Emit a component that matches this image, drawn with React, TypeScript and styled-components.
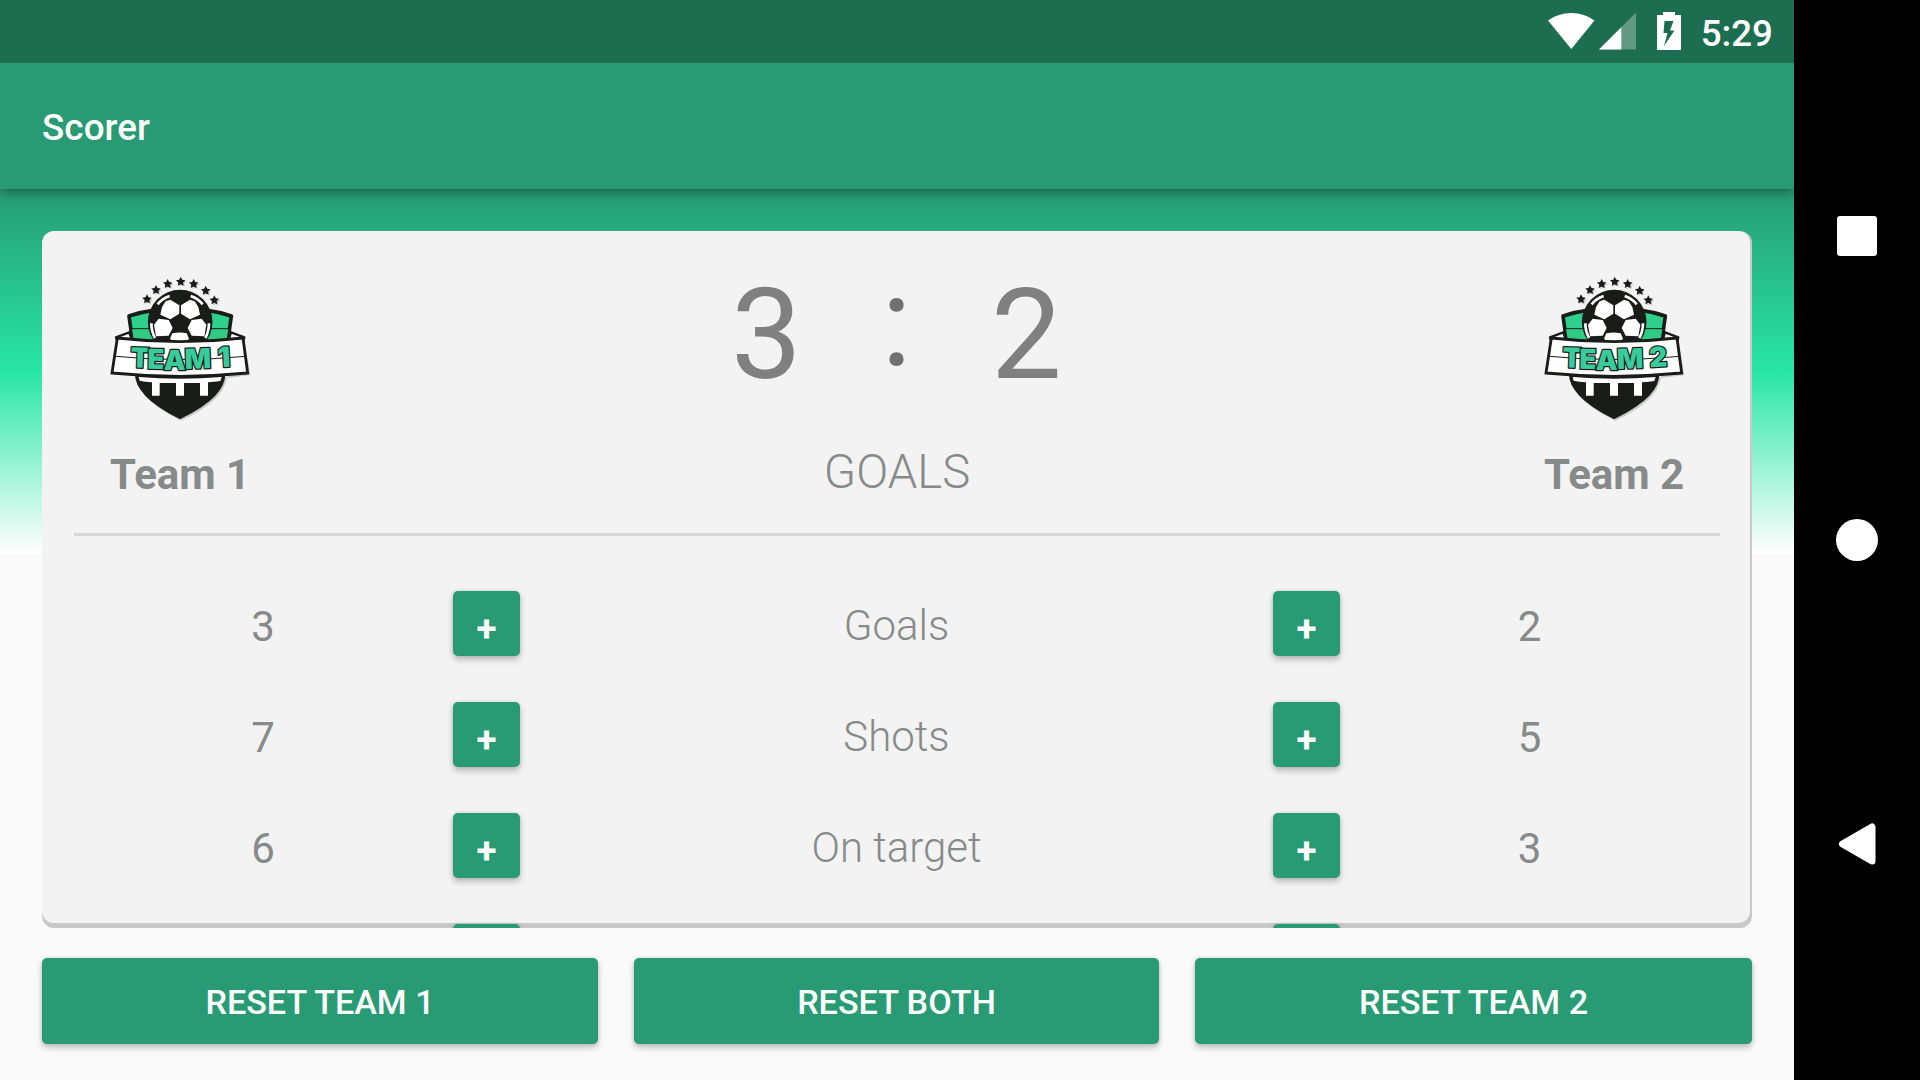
import React, { useState } from 'react';
import styled, { createGlobalStyle } from 'styled-components';

const GREEN = '#289b74';
const INK = '#1a1c1a';

const GlobalStyle = createGlobalStyle`
  * { box-sizing: border-box; }
  body {
    margin: 0;
    background: #fafafa;
    font-family: Roboto, "Liberation Sans", sans-serif;
    overflow: hidden;
  }
  svg { display: block; }
`;

const Device = styled.div`
  display: grid;
  grid-template-columns: 1794px 126px;
  width: 1920px;
  height: 1080px;
`;

const Screen = styled.div`
  display: flex;
  flex-direction: column;
  height: 1080px;
  overflow: hidden;
  background: #fafafa;
`;

const StatusBar = styled.div`
  display: flex;
  justify-content: flex-end;
  flex: none;
  height: 63px;
  padding: 12px 21px 0 0;
  background: #1d6d51;
  z-index: 2;
`;

const StatusIcon = styled.svg<{ $gap: number }>`
  flex: none;
  margin-right: ${(p) => p.$gap}px;
`;

const Clock = styled.span`
  color: #fff;
  font-size: 36.75px;
  font-weight: 500;
  line-height: 43px;
`;

const AppBar = styled.header`
  display: flex;
  align-items: center;
  flex: none;
  height: 126px;
  padding: 2px 42px 0;
  background: ${GREEN};
  box-shadow: 0 3px 11px rgba(0, 0, 0, 0.38);
  z-index: 1;
`;

const Title = styled.h1`
  margin: 0;
  color: #fff;
  font-size: 36.75px;
  font-weight: 500;
  letter-spacing: 0.1px;
`;

const Body = styled.main`
  display: flex;
  flex-direction: column;
  flex: 1;
  gap: 30px;
  padding: 42px;
  background: linear-gradient(${GREEN} 0, #27e6a5 182px, #fff 364px) top / 100% 364.5px no-repeat;
`;

const Card = styled.section`
  position: relative;
  flex: none;
  height: 697px;
  border-radius: 12px;
  overflow: hidden;
  background: #c8c8c8;
  &::before {
    content: '';
    position: absolute;
    inset: 0 2px 5px 0;
    border-radius: 12px;
    background: #f3f3f3;
  }
`;

const CardContent = styled.div`
  position: relative;
`;

const Header = styled.div`
  display: grid;
  grid-template-columns: 142px 1fr 142px;
  height: 302px;
  padding: 45px 66px 0 68px;
`;

const Team = styled.div`
  display: flex;
  flex-direction: column;
  gap: 29px;
`;

const TeamName = styled.div`
  color: #868b8a;
  font-size: 42px;
  font-weight: 700;
  line-height: 50px;
  white-space: nowrap;
`;

const Center = styled.div`
  display: flex;
  flex-direction: column;
  align-items: center;
  padding-right: 3px;
`;

const Score = styled.div`
  display: grid;
  grid-template-columns: 130px 130px 130px;
  justify-items: center;
  height: 118px;
  color: #808080;
  font-size: 126px;
  line-height: 118px;
`;

const Colon = styled.span`
  margin-top: -13px;
  color: #707070;
`;

const Caption = styled.div`
  margin-top: 50px;
  padding-left: 1px;
  color: #868b8a;
  font-size: 47.25px;
  font-weight: 300;
  line-height: 56px;
`;

const Divider = styled.hr`
  height: 3px;
  margin: 0 32px;
  border: 0;
  background: #d7d7d7;
`;

const Stats = styled.div`
  display: grid;
  grid-auto-rows: 65px;
  row-gap: 46px;
  padding-top: 55px;
`;

const Cell = styled.span<{ $kind: 'home' | 'label' | 'away' }>`
  grid-column: ${(p) => ({ home: 1, label: 4, away: 7 })[p.$kind]};
  padding-top: ${(p) => (p.$kind === 'label' ? 4 : 5)}px;
  color: #868b8a;
  font-size: 42px;
  font-weight: ${(p) => (p.$kind === 'label' ? 300 : 400)};
  line-height: 49px;
`;

const StatRow = styled.div`
  display: grid;
  grid-template-columns: 230px 75px 67px 1fr 67px 75px 229px;
  align-items: center;
  justify-items: center;
  padding: 0 108px 0 106px;
`;

const Raised = styled.button`
  border: 0;
  border-radius: 5px;
  background: ${GREEN};
  box-shadow: 0 4px 6px rgba(0, 0, 0, 0.22), 0 0 4px rgba(0, 0, 0, 0.12);
  color: #fff;
  font-family: inherit;
`;

const AddButton = styled(Raised)<{ $side: 'home' | 'away' }>`
  grid-column: ${(p) => (p.$side === 'home' ? 3 : 5)};
  width: 67px;
  height: 65px;
  padding: 9px 0 0;
  font-size: 36.75px;
  font-weight: 700;
  line-height: 43px;
`;

const Actions = styled.div`
  display: grid;
  grid-template-columns: 556px 525px 557px;
  gap: 36px;
  height: 86px;
`;

const ActionButton = styled(Raised)`
  padding: 2px 0 0;
  font-size: 34.125px;
  font-weight: 500;
  text-transform: uppercase;
`;

const NavBar = styled.nav`
  display: flex;
  flex-direction: column;
  justify-content: space-between;
  align-items: center;
  padding: 215px 0 215px;
  background: #000;
`;

const star = (cx: number, cy: number, r: number) =>
  Array.from({ length: 10 }, (_, i) => {
    const a = (Math.PI / 5) * i - Math.PI / 2;
    const d = i % 2 ? r * 0.5 : r;
    return `${(cx + d * Math.cos(a)).toFixed(1)},${(cy + d * Math.sin(a)).toFixed(1)}`;
  }).join(' ');

const STARS = [
  [171, 118], [198, 90], [233, 72], [272, 65], [311, 72], [347, 92], [373, 121],
];

function BallHalf() {
  return (
    <g fill="#fff">
      <polygon points="216,141 227,124 241,119 268,136 268,161 241,178 211,164" />
      <polygon points="192,194 206,176 236,180 248,204 236,227 198,229" />
      <path d="M203 133Q216 116 239 108" fill="none" stroke="#fff" strokeWidth="8" />
      <path d="M184 190Q184 214 195 234" fill="none" stroke="#fff" strokeWidth="8" />
    </g>
  );
}

function ShieldHalf() {
  return (
    <g stroke={INK} strokeLinejoin="round">
      <path d="M78 232L118 217L126 242L82 244Z" fill="#fff" strokeWidth="7" />
      <path d="M117 168Q150 156 190 151V246H128Z" fill="#2fd08b" strokeWidth="11" />
      <path d="M126 208H190V242H132Z" fill="#2fcb80" stroke="none" />
      <path d="M120 206H190" strokeWidth="3" />
    </g>
  );
}

function Crest({ digit }: { digit: number }) {
  const xs = digit === 1 ? '121 172 221 285 0 385' : '115 166 215 280 0 377';
  return (
    <svg width="140" height="145" viewBox="60 48 420 435">
      <g fill="#c9c9c9" transform="translate(4 4)">
        {STARS.map(([x, y]) => (
          <polygon key={x} points={star(x, y, 14)} />
        ))}
        <path d="M135 348Q145 420 270 478Q397 420 407 348Z" />
        <path d="M458 228L477 342L407 350Z" />
      </g>
      {STARS.map(([x, y]) => (
        <polygon key={x} points={star(x, y, 15)} fill={INK} />
      ))}
      <ShieldHalf />
      <g transform="translate(541 0) scale(-1 1)"><ShieldHalf /></g>
      <circle cx="270.5" cy="186" r="97" fill={INK} />
      <BallHalf />
      <g transform="translate(541 0) scale(-1 1)"><BallHalf /></g>
      <path d="M247 220Q270 215 290 220L297 236L291 243H247L240 236Z" fill="#fff" />
      <path d="M135 342Q134 373 166 407Q196 440 270 478Q345 440 376 407Q406 375 406 342Z" fill={INK} />
      <path d="M146 351Q270 362 395 351L391 363Q375 366 354 367V407H330V369H282V407H258V369H209V407H186V367Q164 366 149 362Z" fill="#fff" />
      <path d="M82 234Q270 256 459 234L473 339Q270 359 66 339Z" fill="#fff" stroke={INK} strokeWidth="8.5" />
      <path d="M77 289Q270 308 468 289" fill="none" stroke={INK} strokeWidth="3" />
      <text
        x={xs}
        y="322 326 329 327 320 322"
        rotate="2 1 0 -2 0 -3"
        fontFamily="Inter, 'Liberation Sans', sans-serif"
        fontSize="83"
        fontWeight="900"
        fill="#38cc9c"
        stroke={INK}
        strokeWidth="7.5"
        strokeLinejoin="round"
        paintOrder="stroke"
      >
        {`TEAM ${digit}`}
      </text>
    </svg>
  );
}

const INITIAL: [string, number, number][] = [
  ['Goals', 3, 2],
  ['Shots', 7, 5],
  ['On target', 6, 3],
];

export default function App() {
  const [stats, setStats] = useState(INITIAL);

  const add = (row: number, home: number, away: number) =>
    setStats((all) => all.map((s, i) => (i === row ? [s[0], s[1] + home, s[2] + away] : s)));

  const reset = (home: boolean, away: boolean) =>
    setStats((all) => all.map(([n, a, b]) => [n, home ? 0 : a, away ? 0 : b]));

  return (
    <Device>
      <GlobalStyle />
      <Screen>
        <StatusBar>
          <StatusIcon $gap={4} width="47" height="38" viewBox="0 0 47 38">
            <path d="M0 8.5Q10 1 23.3 1T46.5 8.5L23.3 37Z" fill="#fff" />
          </StatusIcon>
          <StatusIcon $gap={21} width="37" height="38" viewBox="0 0 37 38">
            <path d="M37 0.5V37.5H0Z" fill="#fff" fillOpacity="0.3" />
            <path d="M22.3 15.2V37.5H0Z" fill="#fff" />
          </StatusIcon>
          <StatusIcon $gap={20} width="24" height="38" viewBox="0 0 24 38">
            <path
              d="M6 0H18V3H24V38H0V3H6ZM7.5 9L6.5 21H10.5L7 34L17.5 18.500H13L16.500 9Z"
              fill="#fff"
              fillRule="evenodd"
            />
          </StatusIcon>
          <Clock>5:29</Clock>
        </StatusBar>
        <AppBar>
          <Title>Scorer</Title>
        </AppBar>
        <Body>
          <Card>
            <CardContent>
              <Header>
                <Team>
                  <Crest digit={1} />
                  <TeamName>Team 1</TeamName>
                </Team>
                <Center>
                  <Score>
                    <span>{stats[0][1]}</span>
                    <Colon>:</Colon>
                    <span>{stats[0][2]}</span>
                  </Score>
                  <Caption>GOALS</Caption>
                </Center>
                <Team>
                  <Crest digit={2} />
                  <TeamName>Team 2</TeamName>
                </Team>
              </Header>
              <Divider />
              <Stats>
                {stats.map(([name, a, b], i) => (
                  <StatRow key={name}>
                    <Cell $kind="home">{a}</Cell>
                    <AddButton $side="home" onClick={() => add(i, 1, 0)}>+</AddButton>
                    <Cell $kind="label">{name}</Cell>
                    <AddButton $side="away" onClick={() => add(i, 0, 1)}>+</AddButton>
                    <Cell $kind="away">{b}</Cell>
                  </StatRow>
                ))}
                <StatRow>
                  <AddButton $side="home" />
                  <AddButton $side="away" />
                </StatRow>
              </Stats>
            </CardContent>
          </Card>
          <Actions>
            <ActionButton onClick={() => reset(true, false)}>Reset Team 1</ActionButton>
            <ActionButton onClick={() => reset(true, true)}>Reset Both</ActionButton>
            <ActionButton onClick={() => reset(false, true)}>Reset Team 2</ActionButton>
          </Actions>
        </Body>
      </Screen>
      <NavBar>
        <svg width="42" height="42" viewBox="0 0 42 42">
          <rect x="1" y="1" width="40" height="40" rx="3" fill="#fff" />
        </svg>
        <svg width="42" height="42" viewBox="0 0 42 42">
          <circle cx="21" cy="21" r="21" fill="#fff" />
        </svg>
        <svg width="42" height="42" viewBox="0 0 42 42">
          <path d="M6.500 21L36 4V38Z" fill="#fff" stroke="#fff" strokeWidth="7" strokeLinejoin="round" />
        </svg>
      </NavBar>
    </Device>
  );
}
